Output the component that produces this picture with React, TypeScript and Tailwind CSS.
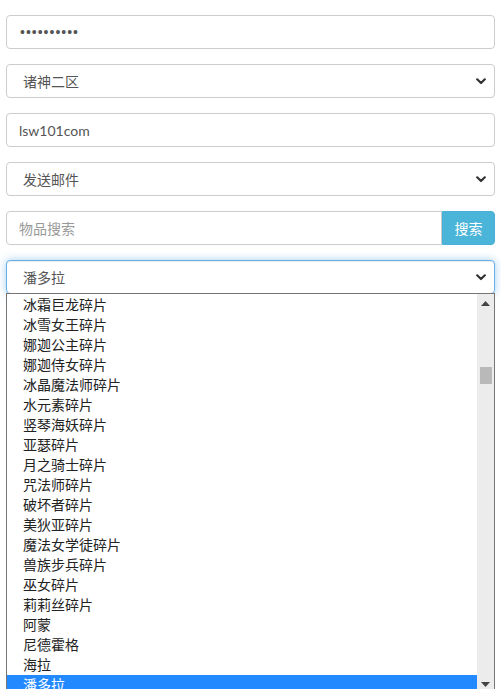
import React from "react";

const FONT = { fontFamily: '"Open Sans", "Noto Sans CJK SC", sans-serif' };

function Chevron() {
  return (
    <svg width="10" height="7" viewBox="0 0 10 7" className="shrink-0">
      <path d="M1.2 1.3 L5 5 L8.8 1.3" fill="none" stroke="#333" strokeWidth="2.2" strokeLinecap="round" strokeLinejoin="round" />
    </svg>
  );
}

function SelectBox({ label, focused }: { label: string; focused?: boolean }) {
  return (
    <div
      className={
        "h-[34px] rounded-[4px] border bg-white flex items-center justify-between pl-[16px] pr-[8px] text-[14px] text-[#555] " +
        (focused
          ? "border-[#66afe9] shadow-[inset_0_1px_1px_rgba(0,0,0,0.075),0_0_8px_rgba(102,175,233,0.6)]"
          : "border-[#ccc]")
      }
    >
      <span>{label}</span>
      <Chevron />
    </div>
  );
}

const items = [
  "冰霜巨龙碎片",
  "冰雪女王碎片",
  "娜迦公主碎片",
  "娜迦侍女碎片",
  "冰晶魔法师碎片",
  "水元素碎片",
  "竖琴海妖碎片",
  "亚瑟碎片",
  "月之骑士碎片",
  "咒法师碎片",
  "破坏者碎片",
  "美狄亚碎片",
  "魔法女学徒碎片",
  "兽族步兵碎片",
  "巫女碎片",
  "莉莉丝碎片",
  "阿蒙",
  "尼德霍格",
  "海拉",
  "潘多拉",
];

export default function App() {
  return (
    <div className="bg-white w-[501px] h-[689px] overflow-hidden px-[6px] pt-[15px]" style={FONT}>
      <div className="flex flex-col gap-[15px]">
        <div className="h-[34px] rounded-[4px] border border-[#ccc] bg-white flex items-center pl-[13px] text-[14px] text-[#555] tracking-[1px] font-['Liberation_Sans',sans-serif]">
          ••••••••••
        </div>
        <SelectBox label="诸神二区" />
        <div className="h-[34px] rounded-[4px] border border-[#ccc] bg-white flex items-center px-[12px] text-[14px] text-[#555] font-['Lato',sans-serif]">
          lsw101com
        </div>
        <SelectBox label="发送邮件" />
        <div className="flex h-[34px]">
          <div className="flex-1 rounded-l-[4px] border border-[#ccc] bg-white flex items-center px-[12px] text-[14px] text-[#999]">
            物品搜索
          </div>
          <div className="w-[53px] rounded-r-[4px] bg-[#4bb4d9] border border-[#46b0d6] flex items-center justify-center text-[14px] text-white">
            搜索
          </div>
        </div>
        <div>
          <SelectBox label="潘多拉" focused />
          <div className="relative -mt-[1px] h-[402px] border border-[#767676] bg-white flex">
            <div className="flex-1 pt-[1px] text-[14px] text-[#222] leading-[20px]">
              {items.map((it, i) => (
                <div
                  key={it}
                  className={
                    "h-[20px] pl-[16px] " +
                    (i === items.length - 1 ? "bg-[#2389ff] text-white" : "")
                  }
                >
                  {it}
                </div>
              ))}
            </div>
            <div className="w-[17px] bg-[#ececec] flex flex-col items-center justify-between py-[7px]">
              <svg width="9" height="5" viewBox="0 0 9 5">
                <path d="M0 5 L4.5 0 L9 5 Z" fill="#444" />
              </svg>
              <div className="flex-1 w-full flex flex-col items-center">
                <div className="h-[61px]" />
                <div className="w-[12px] h-[17px] bg-[#b9b9b9]" />
              </div>
              <svg width="9" height="5" viewBox="0 0 9 5">
                <path d="M0 0 L4.5 5 L9 0 Z" fill="#444" />
              </svg>
            </div>
          </div>
        </div>
      </div>
    </div>
  );
}
